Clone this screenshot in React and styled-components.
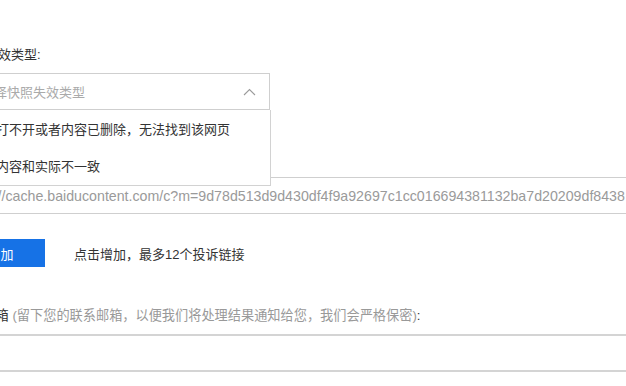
import styled, { createGlobalStyle } from "styled-components";

const GlobalStyle = createGlobalStyle`
  html, body {
    margin: 0;
    padding: 0;
    background: #fff;
    overflow: hidden;
  }
  body {
    font-family: "Liberation Sans", "Noto Sans CJK SC", sans-serif;
  }
`;

const Page = styled.div`
  margin-left: -44px;
  padding-top: 45px;
  display: flex;
  flex-direction: column;
`;

const Field = styled.div`
  display: flex;
  flex-direction: column;
  margin-top: ${(p) => p.$top || 0}px;
`;

const Label = styled.div`
  font-size: ${(p) => p.$size || 13}px;
  line-height: 20px;
  color: #333;
  white-space: nowrap;
  margin-bottom: 8px;
  margin-left: ${(p) => p.$indent || 0}px;
`;

const Hint = styled.span`
  color: #999;
`;

const SelectWrap = styled.div`
  position: relative;
  width: 314px;
`;

const SelectBox = styled.div`
  box-sizing: border-box;
  height: 37px;
  border: 1px solid #cfcfcf;
  display: flex;
  align-items: center;
  justify-content: space-between;
  padding: 0 13px 0 11px;
  font-size: 13px;
  color: #aaa;
  background: #fff;
`;

const Menu = styled.ul`
  position: absolute;
  top: 100%;
  left: 0;
  width: 315px;
  box-sizing: border-box;
  margin: 0;
  padding: 0 0 1px;
  list-style: none;
  background: #fff;
  border: 1px solid #d2d2d2;
  border-top: none;
  z-index: 5;
`;

const MenuItem = styled.li`
  height: 37px;
  display: flex;
  align-items: center;
  padding-left: 13px;
  font-size: 13px;
  color: #333;
  white-space: nowrap;
`;

const TextInput = styled.div`
  box-sizing: border-box;
  width: 760px;
  height: ${(p) => p.$height || 37}px;
  border: ${(p) => (p.$thick ? "2px solid #d4d4d4" : "1px solid #cfcfcf")};
  display: flex;
  align-items: center;
  padding-left: 13px;
  font-size: 14.2px;
  color: #9a9a9a;
  white-space: nowrap;
  background: #fff;
`;

const ActionRow = styled.div`
  display: flex;
  align-items: center;
  gap: 29px;
  margin-top: 25px;
`;

const AddButton = styled.button`
  width: 89px;
  height: 28px;
  border: none;
  background: #1672e6;
  color: #fff;
  font-family: inherit;
  font-size: 13px;
  padding: 0;
`;

const ActionNote = styled.span`
  font-size: 13px;
  color: #333;
`;

function Chevron() {
  return (
    <svg width="13" height="8" viewBox="0 0 13 8" fill="none">
      <path d="M1 7 L6.5 1.5 L12 7" stroke="#9b9b9b" strokeWidth="1.1" />
    </svg>
  );
}

export default function App() {
  return (
    <>
      <GlobalStyle />
      <Page>
        <Field>
          <Label $indent={3}>快照失效类型:</Label>
          <SelectWrap>
            <SelectBox>
              <span>请选择快照失效类型</span>
              <Chevron />
            </SelectBox>
            <Menu>
              <MenuItem>快照打不开或者内容已删除，无法找到该网页</MenuItem>
              <MenuItem>快照内容和实际不一致</MenuItem>
            </Menu>
          </SelectWrap>
        </Field>

        {/* the link label sits under the open menu, so only the input shows */}
        <Field $top={67}>
          <TextInput>
            http://cache.baiducontent.com/c?m=9d78d513d9d430df4f9a92697c1cc016694381132ba7d20209df8438
          </TextInput>
        </Field>

        <ActionRow>
          <AddButton>增加</AddButton>
          <ActionNote>点击增加，最多12个投诉链接</ActionNote>
        </ActionRow>

        <Field $top={39}>
          <Label $size={13.2}>
            联系邮箱 <Hint>(留下您的联系邮箱，以便我们将处理结果通知给您，我们会严格保密)</Hint>:
          </Label>
          <TextInput $thick $height={38} />
        </Field>
      </Page>
    </>
  );
}
